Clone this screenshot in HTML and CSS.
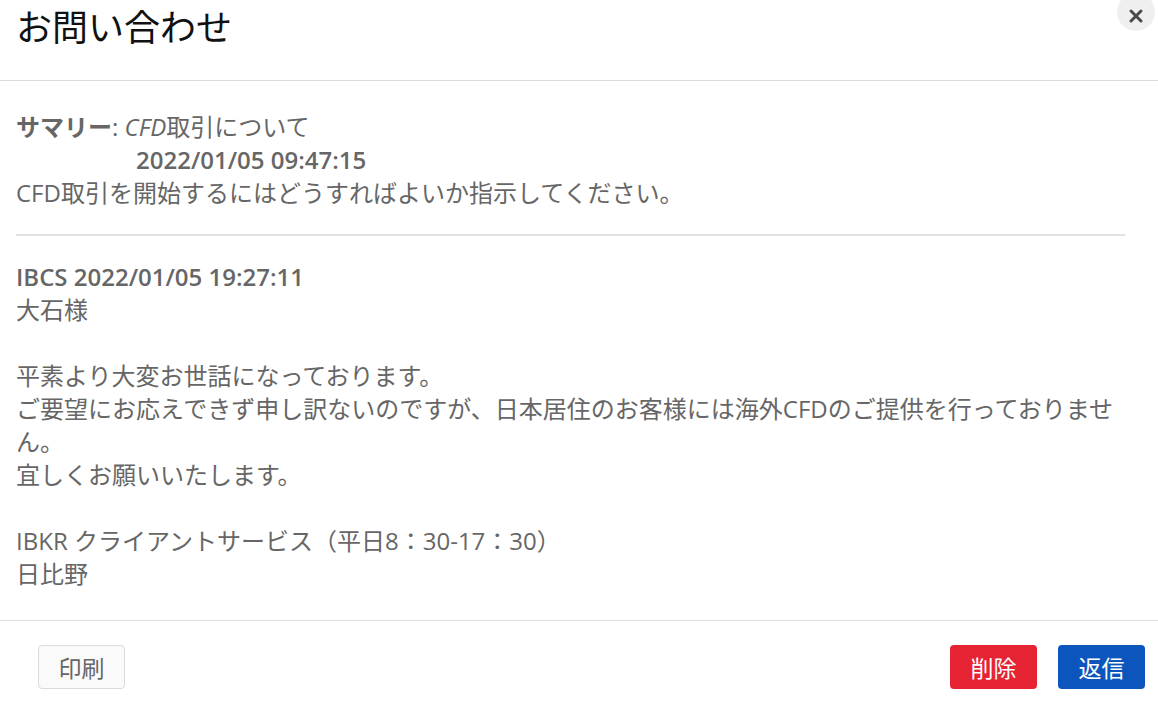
FILE: index.html
```html
<!DOCTYPE html>
<html lang="ja">
<head>
  <meta charset="UTF-8">
  <title>お問い合わせ</title>
  <link rel="stylesheet" href="styles.css">
</head>
<body>

  <div class="modal">
    <div class="modal-header">
      <h1>お問い合わせ</h1>
      <button class="close" aria-label="閉じる">
        <svg width="16" height="16" viewBox="0 0 16 16">
          <path d="M3 3 L13 13 M13 3 L3 13" stroke="#4a4a4a" stroke-width="3" stroke-linecap="round"/>
        </svg>
      </button>
    </div>

    <div class="modal-body">
      <div class="question">
        <div><b>サマリー</b>: <i>CFD</i>取引について</div>
        <div class="date"><b>2022/01/05 09:47:15</b></div>
        <div>CFD取引を開始するにはどうすればよいか指示してください。</div>
      </div>

      <hr>

      <div class="answer">
        <div><b>IBCS 2022/01/05 19:27:11</b></div>
        <div>大石様</div>
        <br>
        <div>平素より大変お世話になっております。</div>
        <div>ご要望にお応えできず申し訳ないのですが、日本居住のお客様には海外CFDのご提供を行っておりません。</div>
        <div>宜しくお願いいたします。</div>
        <br>
        <div>IBKR クライアントサービス（平日8：30-17：30）</div>
        <div>日比野</div>
      </div>
    </div>

    <div class="modal-footer">
      <button class="btn btn-print">印刷</button>
      <div class="actions">
        <button class="btn btn-delete">削除</button>
        <button class="btn btn-reply">返信</button>
      </div>
    </div>
  </div>

</body>
</html>
```

FILE: styles.css
```css
* {
  box-sizing: border-box;
}

body {
  margin: 0;
  font-family: "Open Sans", "Noto Sans CJK JP", sans-serif;
  background-color: white;
  overflow: hidden;
}

.modal {
  width: 1158px;
  height: 703px;
  display: flex;
  flex-direction: column;
}

.modal-header {
  position: relative;
  height: 81px;
  flex-shrink: 0;
  border-bottom: 1px solid #dcdcdc;
  padding: 0 16px;
}

.modal-header h1 {
  margin: 0;
  font-size: 36px;
  font-weight: normal;
  color: #111;
  line-height: 56px;
}

.close {
  position: absolute;
  top: -7px;
  right: 3px;
  width: 38px;
  height: 38px;
  border: none;
  border-radius: 50%;
  background-color: #efefef;
  display: flex;
  align-items: center;
  justify-content: center;
  padding: 7px 0 0 0;
}

.modal-body {
  flex: 1;
  padding: 29px 16px 0 16px;
  font-size: 24px;
  line-height: 33px;
  color: #666;
}

.modal-body b {
  font-weight: 600;
}

.date {
  padding-left: 120px;
}

hr {
  border: none;
  border-top: 2px solid #e2e2e2;
  margin: 25px 17px 24px 0;
}

.modal-footer {
  height: 83px;
  flex-shrink: 0;
  border-top: 1px solid #dde0e4;
  display: flex;
  justify-content: space-between;
  align-items: flex-start;
  padding: 24px 13px 0 38px;
}

.actions {
  display: flex;
  gap: 21px;
}

.btn {
  font-family: "Noto Sans CJK JP", sans-serif;
  height: 44px;
  width: 87px;
  font-size: 23px;
  border-radius: 4px;
  border: 1px solid transparent;
  cursor: pointer;
  padding: 0;
}

.btn-print {
  background-color: #fafafa;
  border-color: #dadada;
  color: #666;
}

.btn-delete {
  background-color: #e62333;
  color: white;
}

.btn-reply {
  background-color: #0c55bd;
  color: white;
}
```
